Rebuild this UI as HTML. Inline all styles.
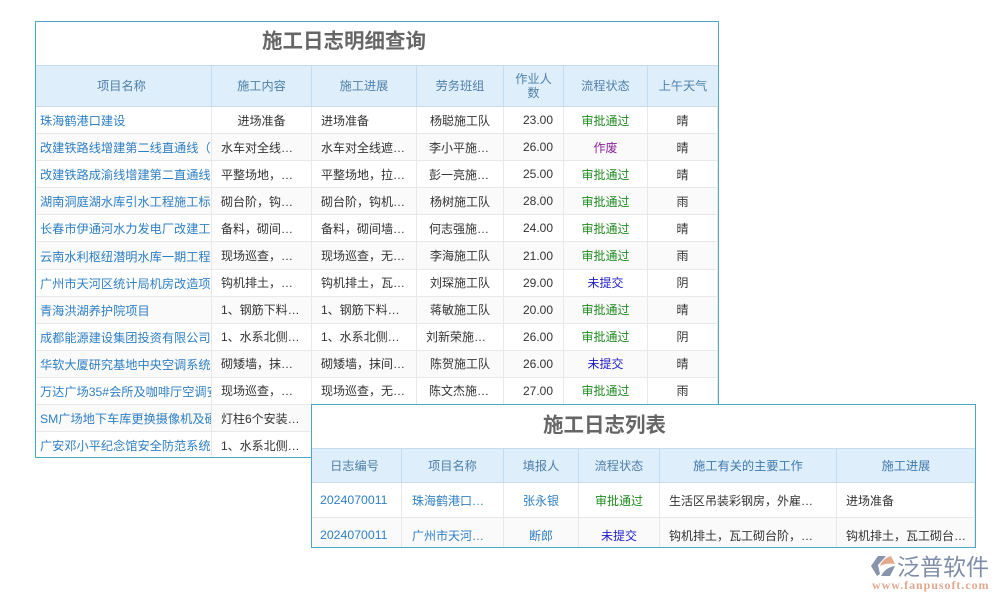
<!DOCTYPE html>
<html lang="zh">
<head>
<meta charset="utf-8">
<title>施工日志</title>
<style>
html,body{margin:0;padding:0;background:#fff;width:1000px;height:600px;overflow:hidden}
body{position:relative;font-family:"Liberation Sans","Noto Sans CJK SC",sans-serif;font-size:12px;color:#333;filter:blur(.25px)}
.box{position:absolute;box-sizing:border-box;background:#fff;border:1px solid #4aa9bd;overflow:hidden}
.title{font-weight:bold;font-size:20.5px;color:#666;box-sizing:border-box;position:absolute;white-space:nowrap}
table{border-collapse:separate;border-spacing:0;table-layout:fixed;position:absolute;left:0}
th{background:#deeefb;font-weight:normal;font-size:12.2px;color:#4f7fa8;border-right:1px solid #c6dcec;border-bottom:1px solid #c6dcec;border-top:1px solid #c6dcec;padding:0;line-height:14px;box-sizing:border-box}
td{border-right:1px solid #e8e8e8;border-bottom:1px solid #e8e8e8;padding:0 5px;white-space:nowrap;overflow:hidden;box-sizing:border-box;text-align:center}
tr:nth-child(odd) td{background:#fafafa}
td.l{text-align:left}
td.k{text-align:left;padding-left:9px}
td.p{padding:0 0 0 4px;font-size:12.2px}
td.m{text-align:left;padding:0 0 0 9px}
td.q{text-align:left;padding:0 0 0 12px}
td.n{text-align:right;padding-right:10px}
td.a{color:#2f7fc4;text-align:left}
td.c{color:#2f7fc4}
.g{color:#1f8a1f}.b{color:#2020c8}.v{color:#8a1f9a}
#t1 tr.h{height:42px}
#t1 tr.r{height:27.1px}
#t2 tr.h{height:35px}
#t2 tr.r{height:35px}
</style>
</head>
<body>
<div class="box" style="left:35px;top:21px;width:684px;height:437px">
<div class="title" style="left:226px;top:0;height:40px;line-height:40px">施工日志明细查询</div>
<table id="t1" style="top:43px;width:682px">
<colgroup><col style="width:176px"><col style="width:100px"><col style="width:105px"><col style="width:87px"><col style="width:60px"><col style="width:84px"><col style="width:70px"></colgroup>
<tr class="h"><th style="padding-right:4px">项目名称</th><th>施工内容</th><th>施工进展</th><th>劳务班组</th><th>作业人<br>数</th><th>流程状态</th><th style="border-right:0">上午天气</th></tr>
<tr class="r"><td class="a p">珠海鹤港口建设</td><td>进场准备</td><td class="m">进场准备</td><td>杨聪施工队</td><td class="n">23.00</td><td class="g">审批通过</td><td>晴</td></tr>
<tr class="r"><td class="a p">改建铁路线增建第二线直通线（</td><td class="k">水车对全线…</td><td class="m">水车对全线遮…</td><td class="q">李小平施…</td><td class="n">26.00</td><td class="v">作废</td><td>晴</td></tr>
<tr class="r"><td class="a p">改建铁路成渝线增建第二直通线</td><td class="k">平整场地，…</td><td class="m">平整场地，拉…</td><td class="q">彭一亮施…</td><td class="n">25.00</td><td class="g">审批通过</td><td>晴</td></tr>
<tr class="r"><td class="a p">湖南洞庭湖水库引水工程施工标段</td><td class="k">砌台阶，钩…</td><td class="m">砌台阶，钩机…</td><td>杨树施工队</td><td class="n">28.00</td><td class="g">审批通过</td><td>雨</td></tr>
<tr class="r"><td class="a p">长春市伊通河水力发电厂改建工程</td><td class="k">备料，砌间…</td><td class="m">备料，砌间墙…</td><td class="q">何志强施…</td><td class="n">24.00</td><td class="g">审批通过</td><td>晴</td></tr>
<tr class="r"><td class="a p">云南水利枢纽潜明水库一期工程</td><td class="k">现场巡查，…</td><td class="m">现场巡查，无…</td><td>李海施工队</td><td class="n">21.00</td><td class="g">审批通过</td><td>雨</td></tr>
<tr class="r"><td class="a p">广州市天河区统计局机房改造项目</td><td class="k">钩机排土，…</td><td class="m">钩机排土，瓦…</td><td>刘琛施工队</td><td class="n">29.00</td><td class="b">未提交</td><td>阴</td></tr>
<tr class="r"><td class="a p">青海洪湖养护院项目</td><td class="k">1、钢筋下料…</td><td class="m">1、钢筋下料…</td><td>蒋敏施工队</td><td class="n">20.00</td><td class="g">审批通过</td><td>晴</td></tr>
<tr class="r"><td class="a p">成都能源建设集团投资有限公司</td><td class="k">1、水系北侧…</td><td class="m">1、水系北侧…</td><td class="m">刘新荣施…</td><td class="n">26.00</td><td class="g">审批通过</td><td>阴</td></tr>
<tr class="r"><td class="a p">华软大厦研究基地中央空调系统</td><td class="k">砌矮墙，抹…</td><td class="m">砌矮墙，抹间…</td><td>陈贺施工队</td><td class="n">26.00</td><td class="b">未提交</td><td>晴</td></tr>
<tr class="r"><td class="a p">万达广场35#会所及咖啡厅空调安装</td><td class="k">现场巡查，…</td><td class="m">现场巡查，无…</td><td class="q">陈文杰施…</td><td class="n">27.00</td><td class="g">审批通过</td><td>雨</td></tr>
<tr class="r"><td class="a p">SM广场地下车库更换摄像机及硬盘</td><td class="k">灯柱6个安装…</td><td></td><td></td><td></td><td></td><td></td></tr>
<tr class="r"><td class="a p">广安邓小平纪念馆安全防范系统</td><td class="k">1、水系北侧…</td><td></td><td></td><td></td><td></td><td></td></tr>
</table>
</div>

<div class="box" style="left:311px;top:404px;width:665px;height:144px">
<div class="title" style="left:231px;top:0;height:43px;line-height:41px">施工日志列表</div>
<table id="t2" style="top:43px;width:663px">
<colgroup><col style="width:90px"><col style="width:102px"><col style="width:75px"><col style="width:81px"><col style="width:177px"><col style="width:138px"></colgroup>
<tr class="h"><th style="padding-right:4px">日志编号</th><th>项目名称</th><th>填报人</th><th>流程状态</th><th style="color:#3f78ad">施工有关的主要工作</th><th style="color:#3f78ad;border-right:0">施工进展</th></tr>
<tr class="r"><td class="a" style="padding-left:8px;font-size:12.3px">2024070011</td><td class="a" style="padding-left:10px">珠海鹤港口…</td><td class="c">张永银</td><td class="g">审批通过</td><td class="l" style="padding-left:9px">生活区吊装彩钢房，外雇…</td><td class="l" style="padding-left:9px">进场准备</td></tr>
<tr class="r"><td class="a" style="padding-left:8px;font-size:12.3px">2024070011</td><td class="a" style="padding-left:10px">广州市天河…</td><td class="c">断郎</td><td class="b">未提交</td><td class="l" style="padding-left:9px">钩机排土，瓦工砌台阶，…</td><td class="l" style="padding-left:9px">钩机排土，瓦工砌台…</td></tr>
</table>
</div>

<svg width="28" height="24" viewBox="0 0 28 24" style="position:absolute;left:869px;top:554px">
<path d="M9 2 L17 2 L9 11 L11 20 L8 22 L2 12 Z" fill="#8794ab"/>
<path d="M11 12 C13 6 18 3 22 2 L26 10 C20 9 15 10 11 12 Z" fill="#e2a98c"/>
<path d="M12 22 C15 16 20 13 26 12 L21 22 Z" fill="#8794ab"/>
</svg>
<div style="position:absolute;left:897px;top:553px;font-size:23px;line-height:28px;color:#7f8da8;white-space:nowrap">泛普软件</div>
<div style="position:absolute;left:872px;top:578px;font-family:'Liberation Serif',serif;font-weight:bold;font-size:12px;line-height:14px;letter-spacing:.95px;color:#dfa88f;white-space:nowrap">www.fanpusoft.com</div>
</body>
</html>
